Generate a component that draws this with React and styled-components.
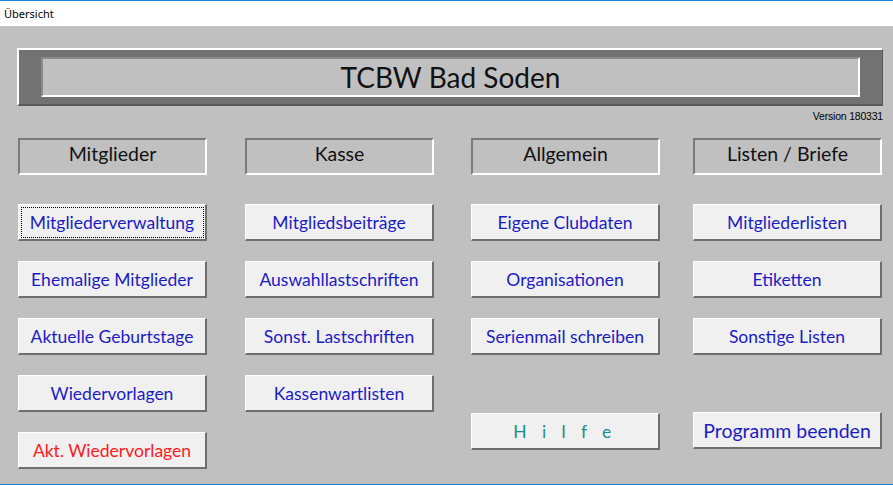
import React from 'react';
import styled, { createGlobalStyle } from 'styled-components';

const GlobalStyle = createGlobalStyle`
  html, body {
    margin: 0;
    padding: 0;
    background: #c0c0c0;
  }
  body {
    font-family: Lato, "Open Sans", sans-serif;
  }
`;

const Window = styled.div`
  width: 893px;
  height: 485px;
  display: flex;
  flex-direction: column;
  background: #c0c0c0;
  border-top: 1px solid #1883d7;
  border-bottom: 1px solid #1883d7;
  box-sizing: border-box;
  overflow: hidden;
`;

const TitleBar = styled.div`
  height: 25px;
  background: #ffffff;
  display: flex;
  align-items: center;
  padding-left: 4px;
  font-family: "Noto Sans", "Open Sans", sans-serif;
  font-size: 11px;
  color: #000;
`;

const Body = styled.div`
  flex: 1;
  padding: 22px 10px 0 17px;
  display: flex;
  flex-direction: column;
`;

const Banner = styled.div`
  width: 866px;
  height: 58px;
  box-sizing: border-box;
  background: #727272;
  border-top: 2px solid #ffffff;
  border-left: 2px solid #ffffff;
  border-right: 1px solid #5a5a5a;
  border-bottom: 2px solid #5a5a5a;
  padding: 7px 22px 0 22px;
`;

const BannerInner = styled.div`
  height: 40px;
  box-sizing: border-box;
  background: #c0c0c0;
  border-top: 2px solid #8a8a8a;
  border-left: 2px solid #8a8a8a;
  border-right: 2px solid #ffffff;
  border-bottom: 2px solid #ffffff;
  display: flex;
  align-items: center;
  justify-content: center;
  font-size: 28px;
  color: #111;
`;

const Version = styled.div`
  width: 866px;
  text-align: right;
  font-family: "Liberation Sans", Arial, sans-serif;
  font-size: 10.5px;
  letter-spacing: -0.2px;
  margin-top: 4px;
  height: 14px;
  color: #000;
`;

const Columns = styled.div`
  display: grid;
  grid-template-columns: 227px 226px 222px 189px;
  margin-top: 14px;
  padding-left: 1px;
`;

const Column = styled.div`
  width: 189px;
  display: flex;
  flex-direction: column;
  gap: 20px;
`;

const GroupTitle = styled.div`
  height: 37px;
  box-sizing: border-box;
  margin-bottom: 9px;
  padding-bottom: 7px;
  background: #c0c0c0;
  border-top: 2px solid #7a7a7a;
  border-left: 2px solid #7a7a7a;
  border-right: 2px solid #ffffff;
  border-bottom: 2px solid #ffffff;
  display: flex;
  align-items: center;
  justify-content: center;
  font-size: 19.5px;
  color: #111;
`;

const Button = styled.div`
  height: 37px;
  box-sizing: border-box;
  margin-top: ${p => p.$push || 0}px;
  background: #f0f0f0;
  border-top: 1px solid #ffffff;
  border-left: 1px solid #ffffff;
  border-right: 2px solid #6e6e6e;
  border-bottom: 2px solid #6e6e6e;
  display: flex;
  align-items: center;
  justify-content: center;
  font-size: ${p => p.$size || 17.5}px;
  color: ${p => p.$color || '#1c1cc4'};
  letter-spacing: ${p => p.$spread || 0}px;
  outline: ${p => (p.$focused ? '1px dotted #000' : 'none')};
  outline-offset: -4px;
  cursor: default;
  white-space: nowrap;
`;

const columns = [
  {
    title: 'Mitglieder',
    buttons: [
      { label: 'Mitgliederverwaltung', focused: true },
      { label: 'Ehemalige Mitglieder' },
      { label: 'Aktuelle Geburtstage' },
      { label: 'Wiedervorlagen' },
      { label: 'Akt. Wiedervorlagen', color: '#ff1a1a' },
    ],
  },
  {
    title: 'Kasse',
    buttons: [
      { label: 'Mitgliedsbeiträge' },
      { label: 'Auswahllastschriften' },
      { label: 'Sonst. Lastschriften' },
      { label: 'Kassenwartlisten' },
    ],
  },
  {
    title: 'Allgemein',
    buttons: [
      { label: 'Eigene Clubdaten' },
      { label: 'Organisationen' },
      { label: 'Serienmail schreiben' },
      { label: 'H i l f e', color: '#168f8f', spread: 5.4, push: 38 },
    ],
  },
  {
    title: 'Listen / Briefe',
    buttons: [
      { label: 'Mitgliederlisten' },
      { label: 'Etiketten' },
      { label: 'Sonstige Listen' },
      { label: 'Programm beenden', push: 37, size: 19.5 },
    ],
  },
];

const App = () => {
  return (
    <Window>
      <GlobalStyle />
      <TitleBar>Übersicht</TitleBar>
      <Body>
        <Banner>
          <BannerInner>TCBW Bad Soden</BannerInner>
        </Banner>
        <Version>Version 180331</Version>
        <Columns>
          {columns.map(col => (
            <Column key={col.title}>
              <GroupTitle>{col.title}</GroupTitle>
              {col.buttons.map(b => (
                <Button
                  key={b.label}
                  $color={b.color}
                  $focused={b.focused}
                  $spread={b.spread}
                  $push={b.push}
                  $size={b.size}
                >
                  {b.label}
                </Button>
              ))}
            </Column>
          ))}
        </Columns>
      </Body>
    </Window>
  );
};

export default App;
